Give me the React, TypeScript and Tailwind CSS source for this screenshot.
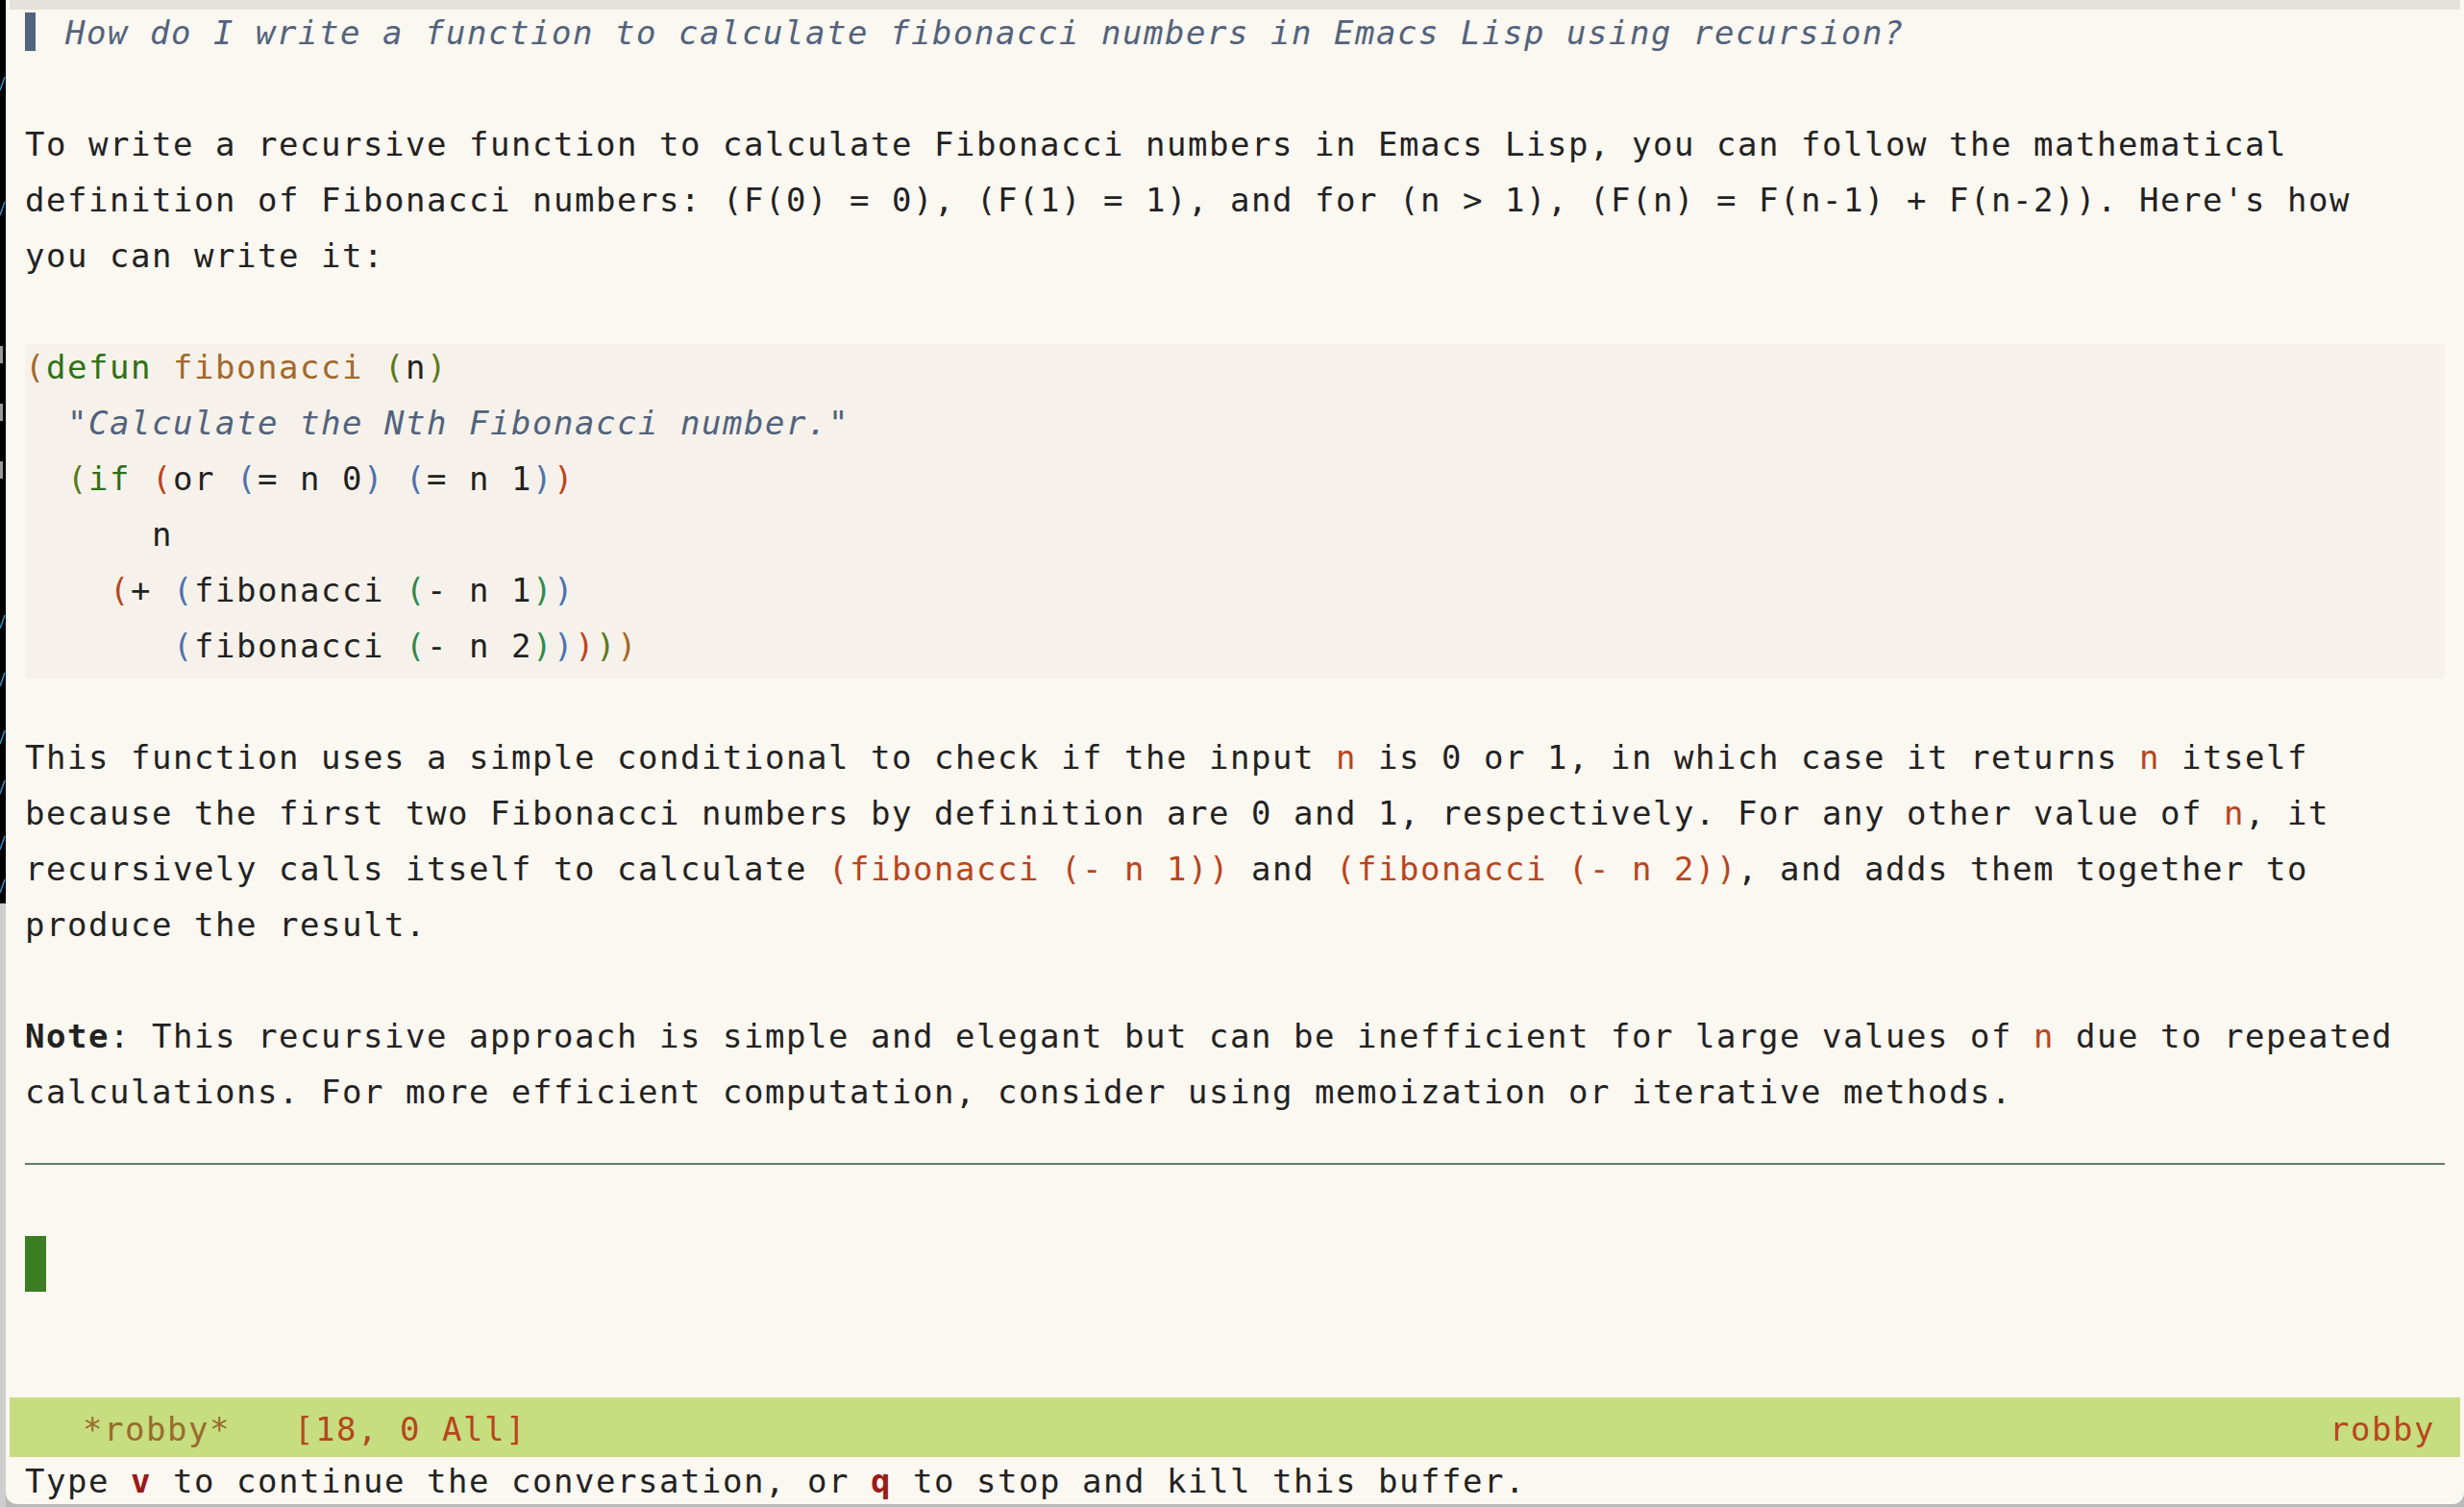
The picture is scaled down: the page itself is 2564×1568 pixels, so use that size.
import React from "react"

const mono = "font-['DejaVu_Sans_Mono',monospace] text-[34px] tracking-[1.53px]"

const Line = ({ children, className = "" }: { children?: React.ReactNode; className?: string }) => (
  <div className={`h-[58px] leading-[48px] whitespace-pre ${className}`}>{children}</div>
)

// rainbow delimiter colours
const brown = "text-[#a3682a]"
const olive = "text-[#5b7a1c]"
const red = "text-[#b9451c]"
const blue = "text-[#4c72b0]"
const green = "text-[#2f8a4c]"
const kw = "text-[#2e7016]"

const P = ({ c, children }: { c: string; children: React.ReactNode }) => <span className={c}>{children}</span>

const Code = ({ children }: { children: React.ReactNode }) => <span className="text-[#b9451c]">{children}</span>

export default function App() {
  return (
    <div className={`flex w-[2564px] h-[1568px] bg-[#b8b8b8] overflow-hidden ${mono}`}>
      {/* window behind, only a sliver shows */}
      <div className="flex flex-col w-[6px] shrink-0">
        <div className="relative h-[940px] bg-black">
          <svg width="6" height="940" className="absolute left-0 top-0">
            {[80, 210, 640, 700, 760, 812, 870, 915].map((y) => (
              <line key={y} x1="0" y1={y + 14} x2="5" y2={y} stroke="#3a8ec6" strokeWidth="1.5" />
            ))}
            {[360, 420, 480].map((y) => (
              <rect key={y} x="0" y={y} width="3" height="18" fill="#9a9a9a" />
            ))}
          </svg>
        </div>
        <div className="flex-1 bg-[#cdcdcd]" />
      </div>

      <div className="flex flex-col w-[2558px] h-[1565px] bg-[#fbf7f1] rounded-b-[12px] text-[#222222]">
        <div className="h-[10px] mx-[4px] shrink-0 bg-[#e5e2dc]" />

        <div className="flex-1 overflow-hidden px-[20px]">
          <Line className="flex">
            <div className="w-[11px] h-[40px] mt-[3px] bg-[#52637c]" />
            <span className="ml-[31px] italic text-[#52637c]">
              How do I write a function to calculate fibonacci numbers in Emacs Lisp using recursion?
            </span>
          </Line>
          <Line />
          <Line>To write a recursive function to calculate Fibonacci numbers in Emacs Lisp, you can follow the mathematical</Line>
          <Line>definition of Fibonacci numbers: (F(0) = 0), (F(1) = 1), and for (n &gt; 1), (F(n) = F(n-1) + F(n-2)). Here's how</Line>
          <Line>you can write it:</Line>
          <Line />

          <div className="bg-[#f6f2eb]">
            <Line>
              <P c={brown}>(</P>
              <P c={kw}>defun</P> <P c={brown}>fibonacci</P> <P c={olive}>(</P>n<P c={olive}>)</P>
            </Line>
            <Line>
              {"  "}
              <span className="italic text-[#52637c]">"Calculate the Nth Fibonacci number."</span>
            </Line>
            <Line>
              {"  "}
              <P c={olive}>(</P>
              <P c={kw}>if</P> <P c={red}>(</P>or <P c={blue}>(</P>= n 0<P c={blue}>)</P> <P c={blue}>(</P>= n 1
              <P c={blue}>)</P>
              <P c={red}>)</P>
            </Line>
            <Line>{"      n"}</Line>
            <Line>
              {"    "}
              <P c={red}>(</P>+ <P c={blue}>(</P>fibonacci <P c={green}>(</P>- n 1<P c={green}>)</P>
              <P c={blue}>)</P>
            </Line>
            <Line>
              {"       "}
              <P c={blue}>(</P>fibonacci <P c={green}>(</P>- n 2<P c={green}>)</P>
              <P c={blue}>)</P>
              <P c={red}>)</P>
              <P c={olive}>)</P>
              <P c={brown}>)</P>
            </Line>
          </div>

          <Line />
          <Line>
            This function uses a simple conditional to check if the input <Code>n</Code> is 0 or 1, in which case it returns{" "}
            <Code>n</Code> itself
          </Line>
          <Line>
            because the first two Fibonacci numbers by definition are 0 and 1, respectively. For any other value of{" "}
            <Code>n</Code>, it
          </Line>
          <Line>
            recursively calls itself to calculate <Code>(fibonacci (- n 1))</Code> and <Code>(fibonacci (- n 2))</Code>, and
            adds them together to
          </Line>
          <Line>produce the result.</Line>
          <Line />
          <Line>
            <span className="font-bold">Note</span>: This recursive approach is simple and elegant but can be inefficient for
            large values of <Code>n</Code> due to repeated
          </Line>
          <Line>calculations. For more efficient computation, consider using memoization or iterative methods.</Line>
          <div className="h-[58px] pt-[40px]">
            <div className="h-[2px] bg-[#657b70]" />
          </div>
          <Line />
          <Line>
            <div className="w-[22px] h-[58px] bg-[#3a7d22]" />
          </Line>
        </div>

        <div className="flex items-start justify-between h-[62px] mx-[4px] shrink-0 bg-[#c6de80] pt-[9px] pl-[76px] pr-[26px] leading-[48px] whitespace-pre">
          <div>
            <span className="text-[#9b6a2c]">*robby*</span>
            {"   "}
            <span className="text-[#b9451c]">[18, 0 All]</span>
          </div>
          <span className="text-[#b9451c]">robby</span>
        </div>

        <div className="h-[49px] shrink-0 px-[20px] leading-[50px] whitespace-pre">
          Type <span className="font-bold text-[#9a1a1a]">v</span> to continue the conversation, or{" "}
          <span className="font-bold text-[#9a1a1a]">q</span> to stop and kill this buffer.
        </div>
      </div>
    </div>
  )
}
